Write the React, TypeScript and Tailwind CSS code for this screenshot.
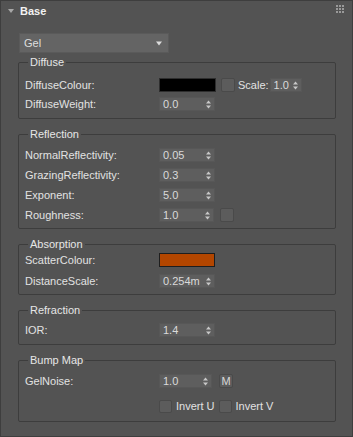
import React from "react";

const LABEL_W = "w-[134px]";

function Spinner({ value, w = "w-[56px]" }: { value: string; w?: string }) {
  return (
    <div className={`${w} h-[14px] bg-[#5e5e5e] border border-[#575757] flex items-center justify-between pl-[3px] pr-[3px] text-[#dadada]`}>
      <span className="leading-[12px]">{value}</span>
      <svg width="5" height="9" viewBox="0 0 5 9">
        <path d="M0 3.5 L2.5 0.5 L5 3.5 Z" fill="#c8c8c8" />
        <path d="M0 5.5 L2.5 8.5 L5 5.5 Z" fill="#c8c8c8" />
      </svg>
    </div>
  );
}

function Check({ w = "w-[13px]", h = "h-[13px]" }: { w?: string; h?: string }) {
  return <div className={`${w} ${h} rounded-[2px] bg-[#5c5c5c] border border-[#4a4a4a]`} />;
}

function Row({ label, children, mt = "mt-[6px]" }: { label: string; children?: React.ReactNode; mt?: string }) {
  return (
    <div className={`flex items-center h-[14px] ${mt}`}>
      <div className={`${LABEL_W} shrink-0 leading-[14px]`}>{label}</div>
      <div className="flex items-center">{children}</div>
    </div>
  );
}

function Group({ title, children, first, pb }: { title: string; children: React.ReactNode; first: string; pb: string }) {
  return (
    <div className={`border border-[#3d3d3d] rounded-[2px] pl-[6px] ${pb}`}>
      <div className="-mt-[7px] ml-[3px] px-[2px] w-fit bg-[#535353] leading-[12px] text-[#e6e6e6]">{title}</div>
      <div className={first}>{children}</div>
    </div>
  );
}

export default function App() {
  return (
    <div
      className="w-[353px] h-[437px] bg-[#535353] border border-[#3e3e3e] text-[11px] text-[#e2e2e2] overflow-hidden"
      style={{ fontFamily: '"Liberation Sans", Arial, sans-serif' }}
    >
      {/* Header */}
      <div className="h-[21px] flex items-center pl-[7px]">
        <svg width="6" height="4" viewBox="0 0 6 4" className="mt-[-2px]">
          <path d="M0 0 L6 0 L3 4 Z" fill="#a8a8a8" />
        </svg>
        <span className="ml-[6px] font-bold text-[#f2f2f2] leading-[12px] mt-[-2px]">Base</span>
        <div className="ml-auto mr-[8px] mt-[-6px] grid grid-cols-3 gap-[1px]">
          {Array.from({ length: 9 }).map((_, i) => (
            <div key={i} className="w-[2px] h-[2px] bg-[#9a9a9a]" />
          ))}
        </div>
      </div>

      <div className="pl-[17px] w-[335px]">
        {/* Dropdown */}
        <div className="mt-[11px] ml-[1px] w-[150px] h-[20px] bg-[#646464] border border-[#5a5a5a] flex items-center justify-between pl-[4px] pr-[6px] text-[#dedede]">
          <span className="leading-[14px]">Gel</span>
          <svg width="6" height="5" viewBox="0 0 6 5">
            <path d="M0 0.5 L6 0.5 L3 4.5 Z" fill="#dcdcdc" />
          </svg>
        </div>

        <div className="mt-[9px] flex flex-col gap-[15px]">
          <Group title="Diffuse" first="mt-[10px]" pb="pb-[7px]">
            <Row label="DiffuseColour:" mt="mt-0">
              <div className="w-[57px] h-[14px] bg-black border border-[#2e2e2e]" />
              <div className="ml-[5px]"><Check w="w-[14px]" h="h-[14px]" /></div>
              <span className="ml-[3px] leading-[14px]">Scale:</span>
              <div className="ml-[1px]"><Spinner value="1.0" w="w-[32px]" /></div>
            </Row>
            <Row label="DiffuseWeight:" mt="mt-[5px]">
              <Spinner value="0.0" />
            </Row>
          </Group>

          <Group title="Reflection" first="mt-[8px]" pb="pb-[6px]">
            <Row label="NormalReflectivity:" mt="mt-0">
              <Spinner value="0.05" />
            </Row>
            <Row label="GrazingReflectivity:">
              <Spinner value="0.3" />
            </Row>
            <Row label="Exponent:">
              <Spinner value="5.0" />
            </Row>
            <Row label="Roughness:">
              <Spinner value="1.0" w="w-[55px]" />
              <div className="ml-[6px]"><Check w="w-[14px]" h="h-[14px]" /></div>
            </Row>
          </Group>

          <Group title="Absorption" first="mt-[3px]" pb="pb-[6px]">
            <Row label="ScatterColour:" mt="mt-0">
              <div className="w-[56px] h-[14px] bg-[#b34600] border border-[#1e1e1e]" />
            </Row>
            <Row label="DistanceScale:" mt="mt-[7px]">
              <Spinner value="0.254m" />
            </Row>
          </Group>

          <Group title="Refraction" first="mt-[7px]" pb="pb-[7px]">
            <Row label="IOR:" mt="mt-0">
              <Spinner value="1.4" />
            </Row>
          </Group>

          <Group title="Bump Map" first="mt-[8px]" pb="pb-[8px]">
            <Row label="GelNoise:" mt="mt-0">
              <Spinner value="1.0" w="w-[53px]" />
              <div className="ml-[7px] w-[14px] h-[14px] rounded-[2px] bg-[#5c5c5c] border border-[#4a4a4a] flex items-center justify-center text-[#d8d8d8] leading-[12px]">
                M
              </div>
            </Row>
            <div className="flex items-center h-[13px] mt-[12px]">
              <div className={`${LABEL_W} shrink-0`} />
              <Check />
              <span className="ml-[4px] leading-[13px]">Invert U</span>
              <div className="ml-[4px]"><Check /></div>
              <span className="ml-[4px] leading-[13px]">Invert V</span>
            </div>
          </Group>
        </div>
      </div>
    </div>
  );
}
